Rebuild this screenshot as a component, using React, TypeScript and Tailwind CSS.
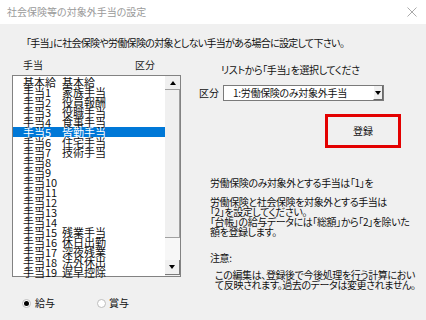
import React from "react";

const items: [string, string][] = [
  ["基本給", "基本給"],
  ["手当1", "家族手当"],
  ["手当2", "役員報酬"],
  ["手当3", "役職手当"],
  ["手当4", "食事手当"],
  ["手当5", "皆勤手当"],
  ["手当6", "住宅手当"],
  ["手当7", "技術手当"],
  ["手当8", ""],
  ["手当9", ""],
  ["手当10", ""],
  ["手当11", ""],
  ["手当12", ""],
  ["手当13", ""],
  ["手当14", ""],
  ["手当15", "残業手当"],
  ["手当16", "休日出勤"],
  ["手当17", "深夜残業"],
  ["手当18", "法外休出"],
  ["手当19", "遅早控除"],
];

export default function App() {
  return (
    <div
      className="w-[426px] h-[320px] bg-[#f0f0f0] overflow-hidden text-[#111] [font-feature-settings:'palt']"
      style={{ fontFamily: '"Noto Sans CJK JP", "Noto Sans", sans-serif' }}
    >
      {/* title bar */}
      <div className="h-[24px] bg-white flex items-center justify-between pl-[7px] pr-[9px]">
        <span className="text-[10px] leading-[12px] text-[#9a9a9a]">社会保険等の対象外手当の設定</span>
        <svg width="10" height="10" viewBox="0 0 10 10">
          <path d="M0.5 0.5 L9.5 9.5 M9.5 0.5 L0.5 9.5" stroke="#a0a0a0" strokeWidth="0.9" />
        </svg>
      </div>

      <div className="pt-[13px] pl-[26px] text-[10px] leading-[12px] tracking-[-0.7px]">
        「手当」に社会保険や労働保険の対象としない手当がある場合に設定して下さい。
      </div>

      <div className="flex">
        {/* left column */}
        <div className="pl-[12px] w-[181px] shrink-0">
          <div className="pt-[10px] flex text-[10px] leading-[12px] text-[#222]">
            <span className="ml-[11px] w-[112px]">手当</span>
            <span>区分</span>
          </div>
          <div className="mt-[4px] h-[202px] bg-white border border-[#828282] flex">
            <div className="flex-1 pt-[1px] text-[11px] leading-[10px]">
              {items.map(([a, b], i) => (
                <div
                  key={i}
                  className={
                    "h-[10px] flex pl-[10px] whitespace-nowrap " +
                    (i === 5 ? "bg-[#0078d7] text-white" : "")
                  }
                >
                  <span className="w-[39px]">{a}</span>
                  <span>{b}</span>
                </div>
              ))}
            </div>
            <div className="w-[15px] bg-[#f0f0f0] flex flex-col">
              <div className="h-[14px] flex items-center justify-center border-b border-[#a0a0a0]">
                <svg width="6" height="4" viewBox="0 0 6 4">
                  <path d="M0 4 L3 0 L6 4 Z" fill="#000" />
                </svg>
              </div>
              <div className="h-[148px] bg-[#f0f0f0] border-r border-b border-[#a0a0a0]" />
              <div className="flex-1 bg-[#f7f7f7]" />
              <div className="h-[15px] mb-[1px] flex items-center justify-center border-r border-b border-[#7a7a7a] bg-[#f0f0f0]">
                <svg width="6" height="4" viewBox="0 0 6 4">
                  <path d="M0 0 L3 4 L6 0 Z" fill="#000" />
                </svg>
              </div>
            </div>
          </div>
          <div className="mt-[20px] flex items-center text-[10px] leading-[12px]">
            <span className="ml-[10px] w-[9px] h-[9px] rounded-full border border-[#bdbdbd] bg-white flex items-center justify-center">
              <span className="w-[5px] h-[5px] rounded-full bg-black" />
            </span>
            <span className="ml-[4px] w-[62px]">給与</span>
            <span className="w-[9px] h-[9px] rounded-full border border-[#bdbdbd] bg-white" />
            <span className="ml-[3px]">賞与</span>
          </div>
        </div>

        {/* right column */}
        <div className="flex-1 flex flex-col">
          <div className="pt-[15px] pl-[40px] text-[10px] leading-[12px] tracking-[-0.4px]">
            リストから「手当」を選択してくださ
          </div>
          <div className="mt-[9px] flex items-center pl-[18px]">
            <span className="w-[24px] text-[10px] leading-[12px]">区分</span>
            <div className="w-[161px] h-[16px] bg-white border border-[#7a7a7a] flex items-center">
              <span className="flex-1 pl-[9px] text-[10px] leading-[12px] whitespace-nowrap tracking-[-0.3px]">
                1:労働保険のみ対象外手当
              </span>
              <div className="w-[10px] h-[14px] bg-[#f0f0f0] border-l border-white border-r border-b border-r-[#6a6a6a] border-b-[#6a6a6a] flex items-center justify-center">
                <svg width="6" height="4" viewBox="0 0 6 4">
                  <path d="M0 0 L3 4 L6 0 Z" fill="#000" />
                </svg>
              </div>
            </div>
          </div>
          <div className="mt-[13px] ml-[144px] w-[76px] h-[34px] border-[3px] border-[#e30000] bg-[#f0f0f0] flex items-center justify-center">
            <span className="text-[10px] leading-[12px]">登録</span>
          </div>
          <div className="pl-[29px] text-[10px] leading-[10px] whitespace-nowrap tracking-[-0.4px]">
            <div className="mt-[30px]">労働保険のみ対象外とする手当は「1」を</div>
            <div className="mt-[9px]">
              労働保険と社会保険を対象外とする手当は
              <br />
              「2」を設定してください。
            </div>
            <div>
              「台帳」の給与データには「総額」から「2」を除いた
              <br />
              額を登録します。
            </div>
            <div className="mt-[16px]">注意:</div>
            <div className="mt-[7px] pl-[5px]">
              この編集は、登録後で今後処理を行う計算におい
              <br />
              て反映されます。過去のデータは変更されません。
            </div>
          </div>
        </div>
      </div>
    </div>
  );
}
